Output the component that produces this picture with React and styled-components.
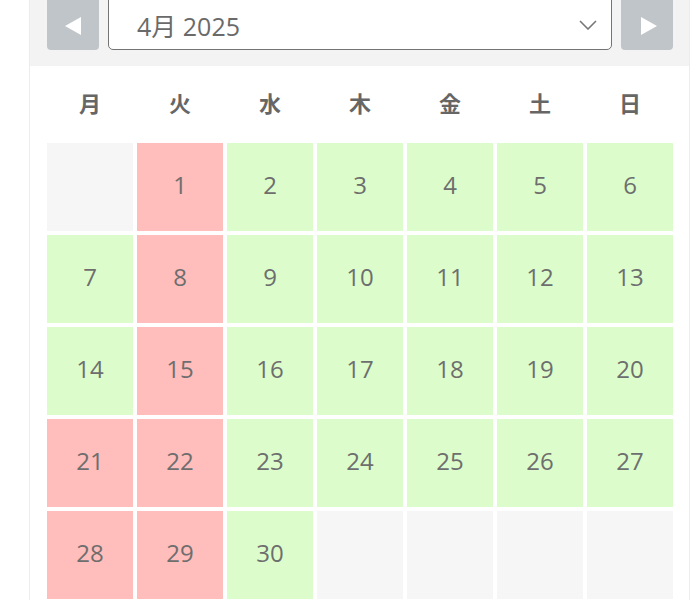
import React from "react";
import styled, { createGlobalStyle } from "styled-components";

const Global = createGlobalStyle`
  html, body { margin: 0; padding: 0; background: #fff; }
  body { font-family: "Open Sans", "Noto Sans CJK JP", sans-serif; }
`;

const Page = styled.div`
  width: 700px;
  height: 600px;
  overflow: hidden;
`;

const Frame = styled.div`
  margin: -16px 0 0 29px;
  width: 659px;
  border-left: 1px solid #ececec;
  border-right: 1px solid #ececec;
  min-height: 700px;
`;

const Toolbar = styled.div`
  display: flex;
  align-items: stretch;
  gap: 9px;
  padding: 10px 16px 16px 17px;
  background: #f3f3f3;
`;

const NavButton = styled.button`
  width: 52px;
  height: 56px;
  flex: none;
  border: none;
  border-radius: 4px;
  background: #c0c5c9;
  display: flex;
  align-items: center;
  justify-content: center;
  padding: 8px 0 0 ${(p) => (p.$next ? "4px" : "0")};
`;

const SelectBox = styled.div`
  flex: 1;
  display: flex;
  align-items: center;
  justify-content: space-between;
  border: 1.5px solid #747474;
  border-radius: 5px;
  background: #fff;
  padding: 5px 14px 0 28px;
  font-size: 25px;
  color: #6a6a6a;
`;

const Body = styled.div`
  padding: 4px 16px 0 17px;
`;

const Weekdays = styled.div`
  display: grid;
  grid-template-columns: repeat(7, 86px);
  column-gap: 4px;
  height: 64px;
  align-items: center;
  margin-bottom: 9px;
`;

const Weekday = styled.div`
  text-align: center;
  font-family: "Noto Sans CJK JP", sans-serif;
  font-weight: 700;
  font-size: 22px;
  color: #666;
`;

const Grid = styled.div`
  display: grid;
  grid-template-columns: repeat(7, 86px);
  grid-auto-rows: 88px;
  gap: 4px;
`;

const colors = {
  empty: "#f6f6f6",
  busy: "#ffbdbb",
  open: "#dcfdcb",
};

const Cell = styled.div`
  background: ${(p) => colors[p.$kind]};
  display: flex;
  align-items: center;
  justify-content: center;
  padding-bottom: 5px;
  font-size: 24px;
  color: #6e6e6e;
`;

const busy = new Set([1, 8, 15, 21, 22, 28, 29]);

const cells = [];
cells.push({ kind: "empty" });
for (let d = 1; d <= 30; d++) cells.push({ kind: busy.has(d) ? "busy" : "open", day: d });
while (cells.length < 35) cells.push({ kind: "empty" });

const Triangle = ({ dir }) => (
  <svg width="18" height="20" viewBox="0 0 18 20">
    {dir === "left" ? (
      <polygon points="17,1 17,19 1,10" fill="#fff" />
    ) : (
      <polygon points="1,1 1,19 17,10" fill="#fff" />
    )}
  </svg>
);

export default function App() {
  return (
    <Page>
      <Global />
      <Frame>
        <Toolbar>
          <NavButton aria-label="前月">
            <Triangle dir="left" />
          </NavButton>
          <SelectBox>
            <span>4月 2025</span>
            <svg width="18" height="10" viewBox="0 0 18 10">
              <polyline points="1,1 9,9 17,1" fill="none" stroke="#777" strokeWidth="1.6" />
            </svg>
          </SelectBox>
          <NavButton $next aria-label="翌月">
            <Triangle dir="right" />
          </NavButton>
        </Toolbar>
        <Body>
          <Weekdays>
            {["月", "火", "水", "木", "金", "土", "日"].map((w) => (
              <Weekday key={w}>{w}</Weekday>
            ))}
          </Weekdays>
          <Grid>
            {cells.map((c, i) => (
              <Cell key={i} $kind={c.kind}>
                {c.day}
              </Cell>
            ))}
          </Grid>
        </Body>
      </Frame>
    </Page>
  );
}
